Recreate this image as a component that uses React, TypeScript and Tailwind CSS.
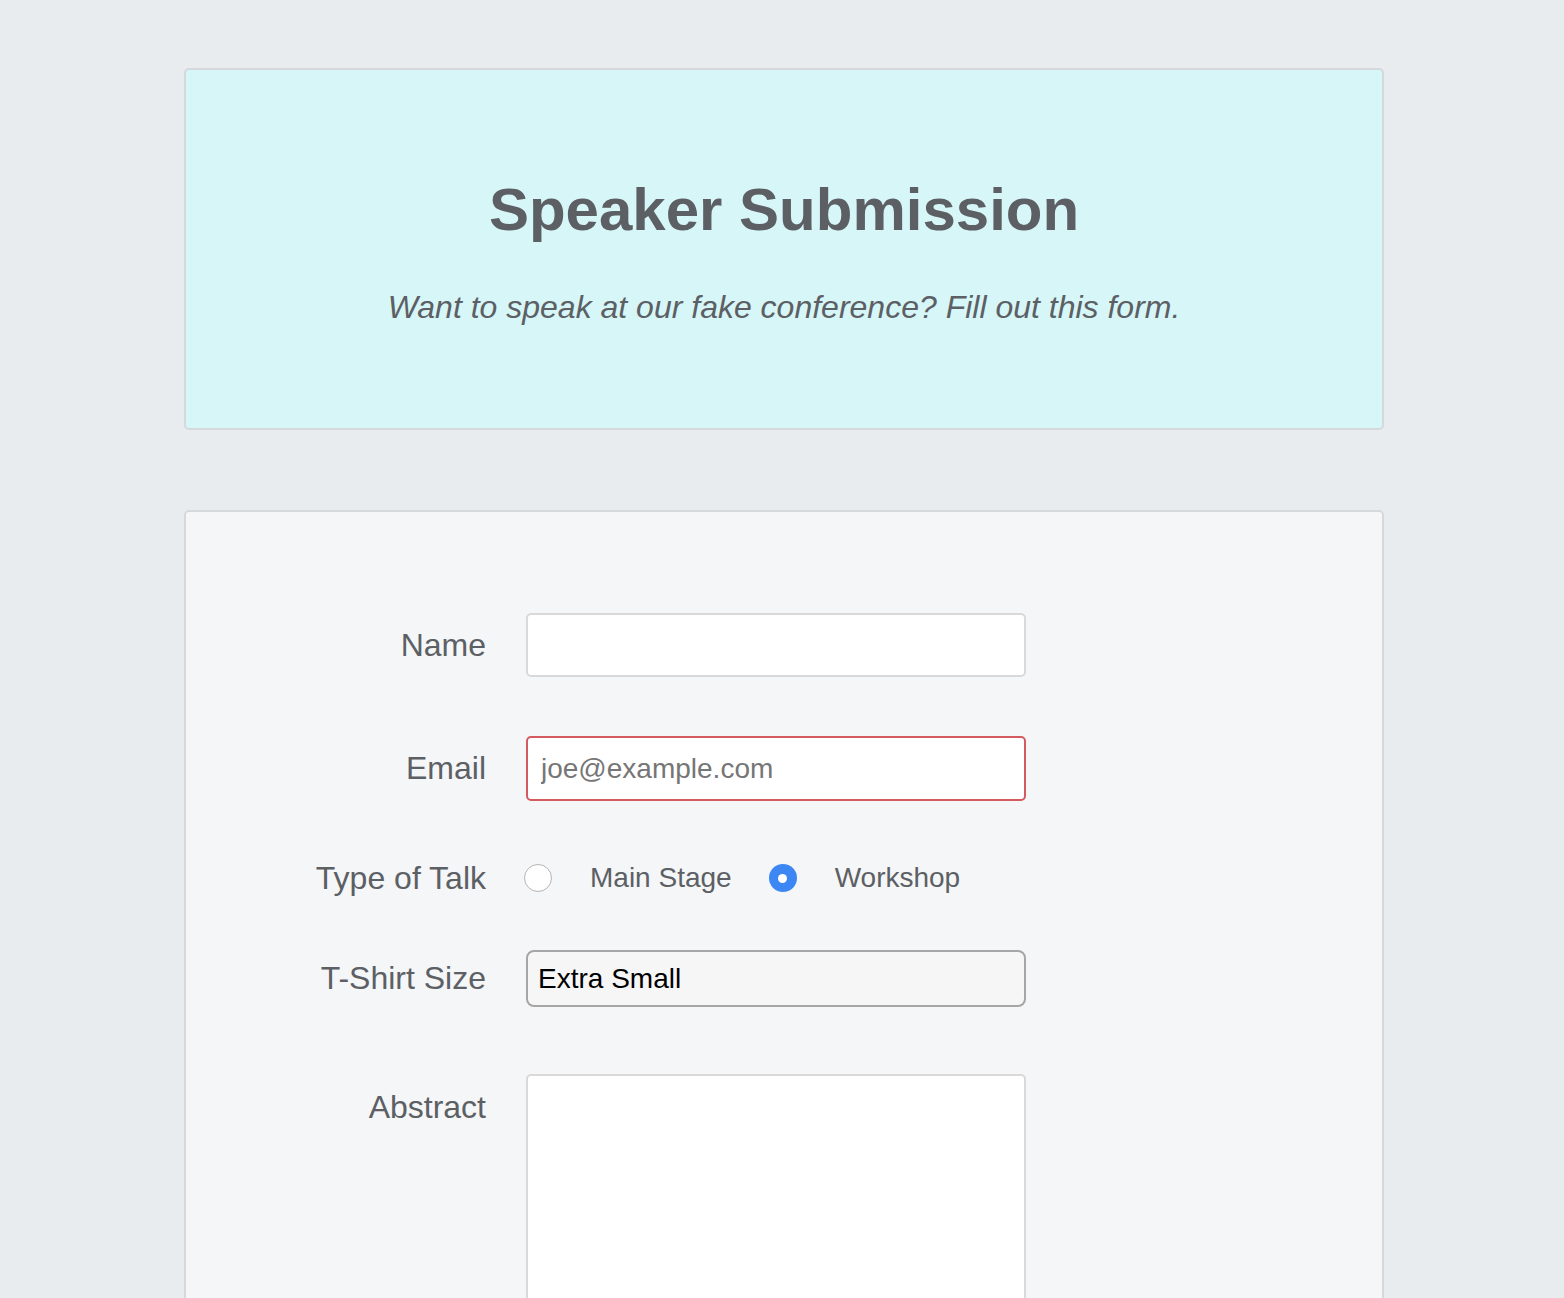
import { useState } from "react";

const labelCls =
  "w-[300px] shrink-0 text-right text-[32px] leading-[1.15] text-[#5c6064]";

export default function App() {
  const [talk, setTalk] = useState("workshop");

  return (
    <div className="min-h-screen bg-[#e9ecef] pt-[68px] pb-20 font-['Liberation_Sans',Arial,sans-serif]">
      <div className="ml-[184px] w-[1200px]">
        <div className="rounded-[5px] border-2 border-[#d5d9dc] bg-[#d6f6f8] pt-[104px] pb-[102px] text-center text-[#5c6064]">
          <h1 className="text-[60px] font-bold leading-[1.2]">Speaker Submission</h1>
          <p className="mt-[42px] text-[32px] italic leading-[1.2]">
            Want to speak at our fake conference? Fill out this form.
          </p>
        </div>

        <form className="mt-[80px] rounded-[5px] border-2 border-[#d5d9dc] bg-[#f5f6f8] pt-[101px] pb-24">
          <div className="flex items-center gap-[40px]">
            <label className={labelCls}>Name</label>
            <input
              type="text"
              className="h-[64px] w-[500px] rounded-[5px] border-2 border-[#d9d9d9] bg-white px-[13px] text-[28px] outline-none"
            />
          </div>

          <div className="mt-[59px] flex items-center gap-[40px]">
            <label className={labelCls}>Email</label>
            <input
              type="email"
              placeholder="joe@example.com"
              className="h-[65px] w-[500px] rounded-[5px] border-2 border-[#d55a5f] bg-white px-[13px] text-[28px] outline-none placeholder:text-[#767676]"
            />
          </div>

          <div className="mt-[49px] flex h-[56px] items-center gap-[38px]">
            <label className={labelCls}>Type of Talk</label>
            <div className="flex items-center text-[28px] text-[#5c6064]">
              <button
                type="button"
                onClick={() => setTalk("main")}
                className={
                  talk === "main"
                    ? "flex h-[28px] w-[28px] items-center justify-center rounded-full bg-[#3d87f5]"
                    : "h-[28px] w-[28px] rounded-full border border-[#b5b5b5] bg-white"
                }
              >
                {talk === "main" && <span className="h-[9px] w-[9px] rounded-full bg-white" />}
              </button>
              <span className="ml-[38px]">Main Stage</span>
              <button
                type="button"
                onClick={() => setTalk("workshop")}
                className={
                  talk === "workshop"
                    ? "ml-[37px] flex h-[28px] w-[28px] items-center justify-center rounded-full bg-[#3d87f5]"
                    : "ml-[37px] h-[28px] w-[28px] rounded-full border border-[#b5b5b5] bg-white"
                }
              >
                {talk === "workshop" && <span className="h-[9px] w-[9px] rounded-full bg-white" />}
              </button>
              <span className="ml-[38px]">Workshop</span>
            </div>
          </div>

          <div className="mt-[44px] flex items-center gap-[40px]">
            <label className={labelCls}>T-Shirt Size</label>
            <select
              defaultValue="xs"
              className="h-[57px] w-[500px] appearance-none rounded-[8px] border-2 border-[#a6a6a6] bg-[#f6f6f6] px-[10px] text-[28px] text-black outline-none"
            >
              <option value="xs">Extra Small</option>
              <option value="s">Small</option>
              <option value="m">Medium</option>
              <option value="l">Large</option>
            </select>
          </div>

          <div className="mt-[67px] flex items-start gap-[40px]">
            <label className={labelCls + " pt-[15px]"}>Abstract</label>
            <textarea className="h-[320px] w-[500px] resize-none rounded-[5px] border-2 border-[#d9d9d9] bg-white p-[13px] text-[28px] outline-none" />
          </div>
        </form>
      </div>
    </div>
  );
}
